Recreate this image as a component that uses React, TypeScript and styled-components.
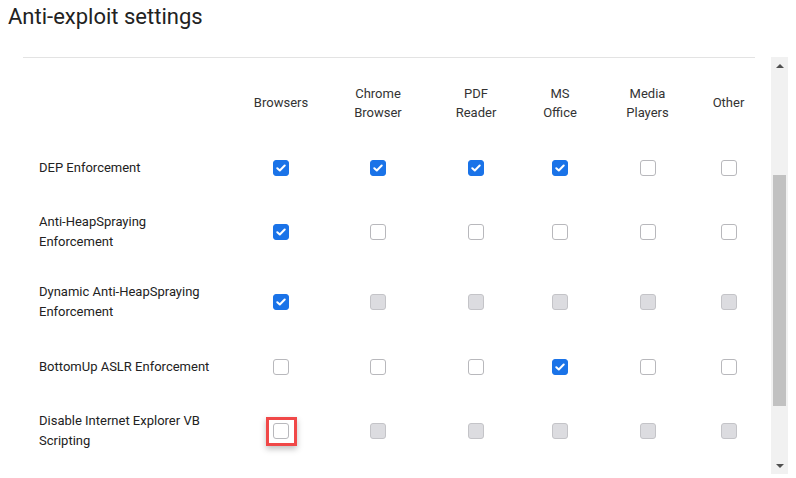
import React from "react";
import styled, { createGlobalStyle } from "styled-components";

const Global = createGlobalStyle`
  html, body { margin: 0; padding: 0; background: #fff; }
  body { font-family: Roboto, "Noto Sans", Arial, sans-serif; color: #202124; }
`;

const Page = styled.div`
  width: 796px;
  height: 478px;
  overflow: hidden;
  padding: 0 8px;
  box-sizing: border-box;
`;

const Title = styled.h1`
  margin: 0;
  padding-top: 5px;
  height: 57px;
  box-sizing: border-box;
  font-size: 22px;
  font-weight: 400;
  line-height: 24px;
  color: #222;
`;

const Panel = styled.div`
  display: flex;
  margin-left: 15px;
  gap: 16px;
  height: 417px;
`;

const Table = styled.div`
  width: 737px;
  border-top: 1px solid #e3e3e3;
  overflow: hidden;
  display: grid;
  grid-template-columns: 213px 90px 104px 92px 76px 99px 63px;
  align-content: start;
`;

const HeadCell = styled.div`
  padding: 25px 0 15px;
  height: 80px;
  box-sizing: border-box;
  display: flex;
  align-items: center;
  justify-content: center;
  text-align: center;
  font-size: 13px;
  line-height: 19.5px;
  color: #333;
`;

const LabelCell = styled.div`
  min-height: 59px;
  padding: 15px 0 15px 16px;
  box-sizing: border-box;
  display: flex;
  align-items: center;
  font-size: 13px;
  line-height: 20px;
  color: #222;
`;

const BoxCell = styled.div`
  display: flex;
  align-items: center;
  justify-content: center;
`;

type State = "on" | "off" | "dis";

const Box = styled.span<{ $s: State }>`
  width: 16px;
  height: 16px;
  box-sizing: border-box;
  border-radius: 3px;
  display: flex;
  align-items: center;
  justify-content: center;
  background: ${(p) => (p.$s === "on" ? "#1a73e8" : p.$s === "dis" ? "#dcdce0" : "#fff")};
  border: 1px solid ${(p) => (p.$s === "on" ? "#1a73e8" : p.$s === "dis" ? "#c4c4c8" : "#b8b8bc")};
`;

const Highlight = styled.span`
  display: flex;
  align-items: center;
  justify-content: center;
  width: 31px;
  height: 29px;
  box-sizing: border-box;
  border: 3px solid #f04848;
  box-shadow: 0 3px 6px rgba(0, 0, 0, 0.25);
`;

const Scrollbar = styled.div`
  width: 17px;
  height: 417px;
  background: #f1f1f1;
  display: flex;
  flex-direction: column;
  align-items: center;
`;

const Arrow = styled.div<{ $down?: boolean }>`
  height: 17px;
  width: 17px;
  display: flex;
  align-items: center;
  justify-content: center;
  &::after {
    content: "";
    border-left: 4px solid transparent;
    border-right: 4px solid transparent;
    ${(p) => (p.$down ? "border-top: 4px solid #505050;" : "border-bottom: 4px solid #505050;")}
  }
`;

const Track = styled.div`
  flex: 1;
  width: 100%;
  display: flex;
  justify-content: center;
  padding-top: 101px;
  box-sizing: border-box;
`;

const Thumb = styled.div`
  width: 13px;
  height: 231px;
  background: #c1c1c1;
`;

const Check = () => (
  <svg width="10" height="8" viewBox="0 0 10 8">
    <path d="M1.3 4.2 L3.8 6.5 L8.7 1.5" fill="none" stroke="#fff" strokeWidth="2" strokeLinecap="round" strokeLinejoin="round" />
  </svg>
);

const CheckBox = ({ s }: { s: State }) => <Box $s={s}>{s === "on" ? <Check /> : null}</Box>;

const headers: React.ReactNode[] = [
  "Browsers",
  <>Chrome<br />Browser</>,
  <>PDF<br />Reader</>,
  <>MS<br />Office</>,
  <>Media<br />Players</>,
  "Other",
];

const rows: { label: React.ReactNode; states: State[]; hl?: boolean }[] = [
  { label: "DEP Enforcement", states: ["on", "on", "on", "on", "off", "off"] },
  { label: <>Anti-HeapSpraying<br />Enforcement</>, states: ["on", "off", "off", "off", "off", "off"] },
  { label: <>Dynamic Anti-HeapSpraying<br />Enforcement</>, states: ["on", "dis", "dis", "dis", "dis", "dis"] },
  { label: "BottomUp ASLR Enforcement", states: ["off", "off", "off", "on", "off", "off"] },
  { label: <>Disable Internet Explorer VB<br />Scripting</>, states: ["off", "dis", "dis", "dis", "dis", "dis"], hl: true },
];

export default function App() {
  return (
    <Page>
      <Global />
      <Title>Anti-exploit settings</Title>
      <Panel>
        <Table>
          <HeadCell />
          {headers.map((h, i) => (
            <HeadCell key={i}>{h}</HeadCell>
          ))}
          {rows.map((r, ri) => (
            <React.Fragment key={ri}>
              <LabelCell>{r.label}</LabelCell>
              {r.states.map((s, ci) => (
                <BoxCell key={ci}>
                  {r.hl && ci === 0 ? (
                    <Highlight>
                      <CheckBox s={s} />
                    </Highlight>
                  ) : (
                    <CheckBox s={s} />
                  )}
                </BoxCell>
              ))}
            </React.Fragment>
          ))}
        </Table>
        <Scrollbar>
          <Arrow />
          <Track>
            <Thumb />
          </Track>
          <Arrow $down />
        </Scrollbar>
      </Panel>
    </Page>
  );
}
